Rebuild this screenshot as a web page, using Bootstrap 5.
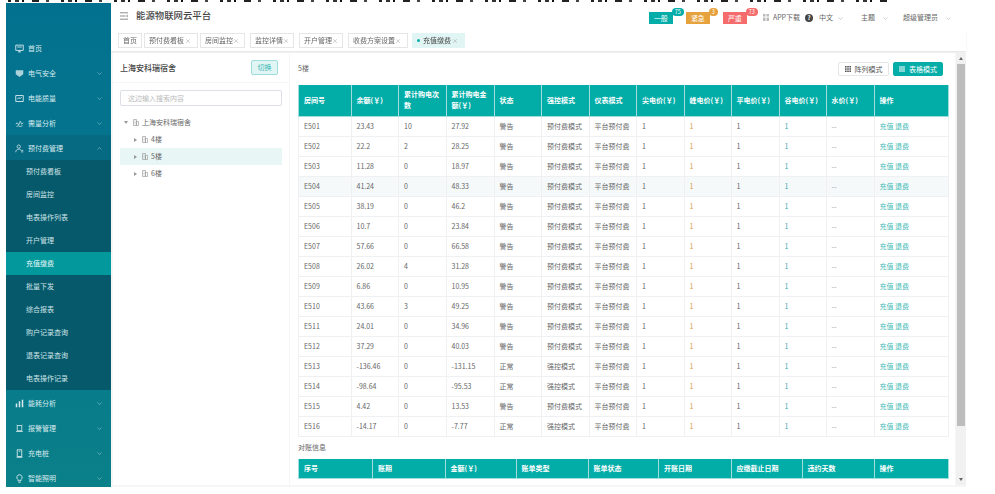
<!doctype html>
<html lang="zh-CN">
<head>
<meta charset="utf-8">
<title>能源物联网云平台</title>
<link href="https://cdn.jsdelivr.net/npm/bootstrap@5.3.0/dist/css/bootstrap.min.css" rel="stylesheet">
<style>
html,body{height:100%;overflow:hidden;background:#fff}
body{font-family:"Noto Sans CJK SC","Liberation Sans",sans-serif;font-size:7px;line-height:1.4;color:#666}
.cut-line{height:2px;margin:0 0 1px 8px;width:885px;background:repeating-linear-gradient(90deg,#222 0 3px,#fff 3px 7px,#333 7px 11px,#fff 11px 14px,#111 14px 16px,#fff 16px 24px,#222 24px 31px,#fff 31px 38px,#444 38px 41px,#fff 41px 53px)}
.app-frame{margin-left:6px;width:960px;height:484px;background:#f6f6f6;filter:blur(.3px)}
.side-bar{width:105px;flex:0 0 105px;padding-top:32px;overflow:hidden;background:linear-gradient(180deg,#02718f 0%,#07788c 60%,#0a8089 100%);color:#d5e9ee}
.menu-row{height:25px;flex:0 0 25px;padding:2px 9px 0 9px;gap:4px;color:#d8eaee;white-space:nowrap}
.menu-row svg.mi{width:9px;height:9px;flex:0 0 9px}
.menu-row.opened{background:#066a82}
.menu-chev{width:5px;height:5px;margin-left:auto;opacity:.65}
.sub-menu{background:#05596b;flex:0 0 auto}
.sub-row{height:23px;padding:1px 0 0 20px;color:#cfe4e8}
.sub-row.on{background:#02989c;color:#eafafa}
.main-col{min-width:0}
.top-head{height:27px;background:#fff;padding:0 15px 0 9px}
.menu-toggle{width:8px;height:8px;margin-right:8px;margin-top:-2px}
.app-name{font-size:9.4px;font-weight:500;color:#444;margin-top:-1px}
.head-right{margin-top:3px}
.alert-tag{position:relative;display:block;width:24px;height:12px;line-height:12px;text-align:center;color:#fff;font-size:7px}
.tag-teal{background:#04ada8}.tag-amber{background:#e6a23c}.tag-red{background:#f56c6c}
.tag-num{position:absolute;top:-4px;left:23px;height:8px;min-width:9px;padding:0 2px;line-height:8px;font-size:5.5px;font-weight:400;border-radius:4px;color:#fff}
.tag-wide{min-width:12px}
.tag-gap{gap:13px;margin-right:16px}
.head-tool{color:#666;white-space:nowrap}
.help-dot{display:inline-block;width:8px;height:8px;border-radius:50%;background:#444;color:#fff;font-size:6px;line-height:8px;text-align:center;font-weight:700;margin-left:5px}
.head-chev{width:5px;height:5px;opacity:.55;margin-left:8px}
.lang-txt{margin-left:6px}.lang-chev{margin-left:5px}
.theme-txt{margin-left:18px}.user-txt{margin-left:15px}
.tab-strip{height:21px;background:#fff;padding:3px 0 0 7px;gap:2px;box-shadow:0 1px 2px rgba(0,0,0,.08);position:relative;z-index:1}
.tab-chip{height:15px;line-height:13px;border:1px solid #e4e6e8;padding:0 6px 0 4px;background:#fff;color:#666;white-space:nowrap;display:flex;justify-content:space-between}
.tab-chip i{font-style:normal;font-size:6px;color:#aaa}
.tab-chip:nth-child(1){width:24px}.tab-chip:nth-child(2){width:54px}.tab-chip:nth-child(3){width:45px}
.tab-chip:nth-child(4){width:44px;margin-left:3px}.tab-chip:nth-child(5){width:44px;margin-left:3px}.tab-chip:nth-child(6){width:60px;margin-left:3px}.tab-chip:nth-child(7){width:53px;margin-left:2px}
.tab-chip.on{background:#e2f5f5;border-color:#e2f5f5;color:#444}
.tab-dot{display:inline-block;width:3px;height:3px;border-radius:50%;background:#04ada8;margin-right:3px;vertical-align:1px}
.body-area{padding:2px 0 2px 2px;gap:1px;min-height:0}
.tree-panel{width:176px;flex:0 0 176px;gap:1px}
.tree-top{height:29px;background:#fff;padding:0 11px 0 7px}
.tree-title{font-size:8px;font-weight:500;color:#444}
.switch-btn{--bs-btn-padding-y:0;--bs-btn-padding-x:0;--bs-btn-font-size:7px;--bs-btn-border-radius:2px;width:27px;height:15px;line-height:13px;background:#e2f5f5;border:1px solid #9fdedc;color:#33b5b1}
.tree-body{background:#fff;padding:7px 7px 0}
.tree-search{height:16px;min-height:16px;padding:0 7px;font-size:7px;border-radius:2px;border-color:#dcdfe6;color:#666}
.tree-search::placeholder{color:#bbb}
.tree-list{margin-top:8px}
.tree-node{height:17px;gap:3px;color:#666}
.lvl-1{padding-left:4px}.lvl-2{padding-left:14px}
.tree-node.on{background:#e9f6f6}
.tri{width:0;height:0;border-style:solid;display:inline-block}
.tri-r{border-width:2px 0 2px 3px;border-color:transparent transparent transparent #999}
.tri-d{border-width:3px 2px 0 2px;border-color:#999 transparent transparent transparent}
.folder-ic{width:6px;height:7px;margin-left:2px}
.data-panel{background:#fff;padding:0 8px 0 8px;overflow:hidden;min-width:0}
.data-top{height:32px;margin-right:4px}
.mode-btn{--bs-btn-padding-y:0;--bs-btn-padding-x:0;--bs-btn-font-size:7px;--bs-btn-border-radius:2px;height:14px;width:51px;gap:4px;line-height:12px}
.mode-off{background:#fff;border:1px solid #e4e6e8;color:#555}
.mode-on{background:#04ada8;border:1px solid #04ada8;color:#fff;width:50px}
table.grid-tb{table-layout:fixed;width:650px;margin:0;border-collapse:collapse;font-size:7px;color:#666;--bs-table-bg:transparent;--bs-table-border-color:#eef0f1}
table.grid-tb>*>tr>*{padding:0 5px;vertical-align:middle;border:1px solid #eef0f1;line-height:11px}
table.grid-tb thead th{background:#02ada8;color:#fff;font-weight:700;border-color:#9fdedc;border-top:0;height:31px}
table.grid-tb tbody td{height:20px;box-shadow:none;white-space:nowrap}
table.grid-tb tr.hl td{background:#f5f9fa}
.meter-tb th{width:47.5px}
.meter-tb th:nth-child(1){width:52.5px}.meter-tb th:nth-child(4){width:48px}.meter-tb th:nth-child(9),.meter-tb th:nth-child(11){width:47px}.meter-tb th:nth-child(10),.meter-tb th:nth-child(12){width:48px}.meter-tb th:nth-child(13){width:74.5px}
.pk{color:#d99a4e!important}.vl{color:#3aa7b0!important}.mu{color:#999!important}
.op-link{color:#3fbab6;text-decoration:none}
.recon-label{height:22px;margin-top:0;color:#666}
table.bill-tb thead th{height:20px!important}
.bill-tb th:nth-child(1){width:74px}.bill-tb th:nth-child(2){width:72.5px}.bill-tb th:nth-child(3){width:71px}.bill-tb th:nth-child(4){width:72px}.bill-tb th:nth-child(5){width:70.5px}.bill-tb th:nth-child(6){width:72.5px}.bill-tb th:nth-child(7){width:71px}.bill-tb th:nth-child(8){width:72px}.bill-tb th:nth-child(9){width:74.5px}
.fake-bar{width:10px;flex:0 0 10px;background:#f1f1f1;padding:4px 0;gap:2px}
.fake-thumb{width:8px;height:362px;background:#bdbdbd;margin:2px auto 0}
.arr{width:0;height:0;border-style:solid;margin:0 auto}
.arr-up{border-width:0 2.5px 3px 2.5px;border-color:transparent transparent #666 transparent}
.arr-dn{border-width:3px 2.5px 0 2.5px;border-color:#666 transparent transparent transparent;margin-top:auto}
</style>
</head>
<body>
<svg width="0" height="0" class="position-absolute">
  <symbol id="chev-d" viewBox="0 0 10 10"><path d="M1 3l4 4 4-4" fill="none" stroke="currentColor" stroke-width="1.2"/></symbol>
  <symbol id="chev-u" viewBox="0 0 10 10"><path d="M1 7l4-4 4 4" fill="none" stroke="currentColor" stroke-width="1.2"/></symbol>
  <symbol id="folder" viewBox="0 0 12 14"><path d="M1 1h6v12H1zM7 5h4v8H7zM3 4h2M3 7h2M3 10h2" fill="none" stroke="#999" stroke-width="1.3"/></symbol>
</svg>
<div class="cut-line"></div>
<div class="app-frame d-flex">
  <aside class="side-bar d-flex flex-column flex-shrink-0">
    <div class="menu-row d-flex align-items-center"><svg class="mi" viewBox="0 0 12 12"><path d="M1 1.5h10v7H1zM4 10.5h4M6 8.5v2M3 4h6" fill="none" stroke="currentColor" stroke-width="1.2"/></svg><span>首页</span></div>
    <div class="menu-row d-flex align-items-center"><svg class="mi" viewBox="0 0 12 12"><path d="M1 1.5h10v5.5L6 10.5 1 7z" fill="currentColor" opacity=".8"/></svg><span>电气安全</span><svg class="menu-chev"><use href="#chev-d"/></svg></div>
    <div class="menu-row d-flex align-items-center"><svg class="mi" viewBox="0 0 12 12"><path d="M1 2h10v8H1zM3 7l2-2 2 1 2-2" fill="none" stroke="currentColor" stroke-width="1.2"/></svg><span>电能质量</span><svg class="menu-chev"><use href="#chev-d"/></svg></div>
    <div class="menu-row d-flex align-items-center"><svg class="mi" viewBox="0 0 12 12"><path d="M1 7l2-2 2 3 2-5 2 4 2-2M2 10l2-1 3 1 3-1" fill="none" stroke="currentColor" stroke-width="1"/></svg><span>需量分析</span><svg class="menu-chev"><use href="#chev-d"/></svg></div>
    <div class="menu-row opened d-flex align-items-center"><svg class="mi" viewBox="0 0 12 12"><circle cx="5" cy="3.5" r="2.2" fill="none" stroke="currentColor"/><path d="M1 11c0-3 2-4 4-4s3 1 3.5 2M8 10.5h3M8.500 8.500h2.500" fill="none" stroke="currentColor"/></svg><span>预付费管理</span><svg class="menu-chev"><use href="#chev-u"/></svg></div>
    <div class="sub-menu">
      <div class="sub-row d-flex align-items-center">预付费看板</div>
      <div class="sub-row d-flex align-items-center">房间监控</div>
      <div class="sub-row d-flex align-items-center">电表操作列表</div>
      <div class="sub-row d-flex align-items-center">开户管理</div>
      <div class="sub-row on d-flex align-items-center">充值缴费</div>
      <div class="sub-row d-flex align-items-center">批量下发</div>
      <div class="sub-row d-flex align-items-center">综合报表</div>
      <div class="sub-row d-flex align-items-center">购户记录查询</div>
      <div class="sub-row d-flex align-items-center">退表记录查询</div>
      <div class="sub-row d-flex align-items-center">电表操作记录</div>
    </div>
    <div class="menu-row d-flex align-items-center"><svg class="mi" viewBox="0 0 12 12"><path d="M1 11V6h2v5zM5 11V3h2v8zM9 11V1h2v10z" fill="currentColor"/></svg><span>能耗分析</span><svg class="menu-chev"><use href="#chev-d"/></svg></div>
    <div class="menu-row d-flex align-items-center"><svg class="mi" viewBox="0 0 12 12"><path d="M3 2h6v7H3zM1.500 10h9M2 1l1 1M10 1L9 2" fill="none" stroke="currentColor" stroke-width="1.100"/></svg><span>报警管理</span><svg class="menu-chev"><use href="#chev-d"/></svg></div>
    <div class="menu-row d-flex align-items-center"><svg class="mi" viewBox="0 0 12 12"><path d="M3 1h6v9H3zM2 11h8M5 3h2" fill="none" stroke="currentColor" stroke-width="1.200"/></svg><span>充电桩</span><svg class="menu-chev"><use href="#chev-d"/></svg></div>
    <div class="menu-row d-flex align-items-center"><svg class="mi" viewBox="0 0 12 12"><path d="M6 1a3.500 3.500 0 0 0-2 6.400V9h4V7.400A3.500 3.500 0 0 0 6 1zM4.500 11h3" fill="none" stroke="currentColor" stroke-width="1.200"/></svg><span>智能照明</span><svg class="menu-chev"><use href="#chev-d"/></svg></div>
  </aside>
  <div class="main-col d-flex flex-column flex-grow-1">
    <header class="top-head d-flex align-items-center">
      <svg class="menu-toggle" viewBox="0 0 10 10"><path d="M0 1h10M0 5h7M0 9h10M9 3.500v3" fill="none" stroke="#888" stroke-width="1.200"/></svg>
      <div class="app-name">能源物联网云平台</div>
      <div class="head-right ms-auto d-flex align-items-center">
        <div class="d-flex tag-gap">
          <span class="alert-tag tag-teal">一般<span class="tag-num tag-wide tag-teal">75</span></span>
          <span class="alert-tag tag-amber">紧急<span class="tag-num tag-amber">3</span></span>
          <span class="alert-tag tag-red">严重<span class="tag-num tag-wide tag-red">73</span></span>
        </div>
        <span class="head-tool d-flex align-items-center gap-1"><svg width="6" height="7" viewBox="0 0 6 7"><path d="M0 0h2.500v2.500H0zM3.500 0H6v2.500H3.500zM0 3.500h2.500V7H0zM3.500 3.500H6V7H3.500z" fill="#bbb"/></svg>APP下载</span>
        <span class="help-dot">?</span>
        <span class="head-tool lang-txt">中文</span><svg class="head-chev lang-chev text-secondary"><use href="#chev-d"/></svg>
        <span class="head-tool theme-txt">主题</span><svg class="head-chev text-secondary"><use href="#chev-d"/></svg>
        <span class="head-tool user-txt">超级管理员</span><svg class="head-chev text-secondary"><use href="#chev-d"/></svg>
      </div>
    </header>
    <nav class="tab-strip d-flex">
      <span class="tab-chip">首页</span>
      <span class="tab-chip"><span>预付费看板</span><i>×</i></span>
      <span class="tab-chip"><span>房间监控</span><i>×</i></span>
      <span class="tab-chip"><span>监控详情</span><i>×</i></span>
      <span class="tab-chip"><span>开户管理</span><i>×</i></span>
      <span class="tab-chip"><span>收费方案设置</span><i>×</i></span>
      <span class="tab-chip on"><span><span class="tab-dot"></span>充值缴费</span><i>×</i></span>
    </nav>
    <div class="body-area d-flex flex-grow-1">
      <section class="tree-panel d-flex flex-column">
        <div class="tree-top d-flex align-items-center justify-content-between">
          <span class="tree-title">上海安科瑞宿舍</span>
          <button type="button" class="btn switch-btn">切换</button>
        </div>
        <div class="tree-body flex-grow-1">
          <input class="form-control tree-search" type="text" placeholder="这边输入搜索内容">
          <div class="tree-list">
            <div class="tree-node lvl-1 d-flex align-items-center"><span class="tri tri-d"></span><svg class="folder-ic"><use href="#folder"/></svg><span>上海安科瑞宿舍</span></div>
            <div class="tree-node lvl-2 d-flex align-items-center"><span class="tri tri-r"></span><svg class="folder-ic"><use href="#folder"/></svg><span>4楼</span></div>
            <div class="tree-node on lvl-2 d-flex align-items-center"><span class="tri tri-r"></span><svg class="folder-ic"><use href="#folder"/></svg><span>5楼</span></div>
            <div class="tree-node lvl-2 d-flex align-items-center"><span class="tri tri-r"></span><svg class="folder-ic"><use href="#folder"/></svg><span>6楼</span></div>
          </div>
        </div>
      </section>
      <section class="data-panel flex-grow-1">
        <div class="data-top d-flex align-items-center">
          <span class="me-auto">5楼</span>
          <button type="button" class="btn mode-btn mode-off d-flex align-items-center justify-content-center"><svg width="6" height="6" viewBox="0 0 6 6"><path d="M0 0h1.600v1.600H0zM2.200 0h1.600v1.600H2.200zM4.400 0H6v1.600H4.400zM0 2.200h1.600v1.600H0zM2.200 2.200h1.600v1.600H2.200zM4.400 2.200H6v1.600H4.400zM0 4.400h1.600V6H0zM2.200 4.400h1.600V6H2.200zM4.400 4.400H6V6H4.400z" fill="#555"/></svg>阵列模式</button>
          <button type="button" class="btn mode-btn mode-on d-flex align-items-center justify-content-center ms-1"><svg width="6" height="6" viewBox="0 0 6 6"><path d="M0 .5h6v1H0zM0 2.500h6v1H0zM0 4.500h6v1H0z" fill="#fff"/></svg>表格模式</button>
        </div>
        <table class="table grid-tb meter-tb">
          <thead><tr><th>房间号</th><th>余额(￥)</th><th>累计购电次数</th><th>累计购电金额(￥)</th><th>状态</th><th>强控模式</th><th>仪表模式</th><th>尖电价(￥)</th><th>峰电价(￥)</th><th>平电价(￥)</th><th>谷电价(￥)</th><th>水价(￥)</th><th>操作</th></tr></thead>
          <tbody>
            <tr><td>E501</td><td>23.43</td><td>10</td><td>27.92</td><td>警告</td><td>预付费模式</td><td>平台预付费</td><td>1</td><td class="pk">1</td><td>1</td><td class="vl">1</td><td class="mu">--</td><td><a class="op-link" href="#">充值</a> <a class="op-link" href="#">退费</a></td></tr>
            <tr><td>E502</td><td>22.2</td><td>2</td><td>28.25</td><td>警告</td><td>预付费模式</td><td>平台预付费</td><td>1</td><td class="pk">1</td><td>1</td><td class="vl">1</td><td class="mu">--</td><td><a class="op-link" href="#">充值</a> <a class="op-link" href="#">退费</a></td></tr>
            <tr><td>E503</td><td>11.28</td><td>0</td><td>18.97</td><td>警告</td><td>预付费模式</td><td>平台预付费</td><td>1</td><td class="pk">1</td><td>1</td><td class="vl">1</td><td class="mu">--</td><td><a class="op-link" href="#">充值</a> <a class="op-link" href="#">退费</a></td></tr>
            <tr class="hl"><td>E504</td><td>41.24</td><td>0</td><td>48.33</td><td>警告</td><td>预付费模式</td><td>平台预付费</td><td>1</td><td class="pk">1</td><td>1</td><td class="vl">1</td><td class="mu">--</td><td><a class="op-link" href="#">充值</a> <a class="op-link" href="#">退费</a></td></tr>
            <tr><td>E505</td><td>38.19</td><td>0</td><td>46.2</td><td>警告</td><td>预付费模式</td><td>平台预付费</td><td>1</td><td class="pk">1</td><td>1</td><td class="vl">1</td><td class="mu">--</td><td><a class="op-link" href="#">充值</a> <a class="op-link" href="#">退费</a></td></tr>
            <tr><td>E506</td><td>10.7</td><td>0</td><td>23.84</td><td>警告</td><td>预付费模式</td><td>平台预付费</td><td>1</td><td class="pk">1</td><td>1</td><td class="vl">1</td><td class="mu">--</td><td><a class="op-link" href="#">充值</a> <a class="op-link" href="#">退费</a></td></tr>
            <tr><td>E507</td><td>57.66</td><td>0</td><td>66.58</td><td>警告</td><td>预付费模式</td><td>平台预付费</td><td>1</td><td class="pk">1</td><td>1</td><td class="vl">1</td><td class="mu">--</td><td><a class="op-link" href="#">充值</a> <a class="op-link" href="#">退费</a></td></tr>
            <tr><td>E508</td><td>26.02</td><td>4</td><td>31.28</td><td>警告</td><td>预付费模式</td><td>平台预付费</td><td>1</td><td class="pk">1</td><td>1</td><td class="vl">1</td><td class="mu">--</td><td><a class="op-link" href="#">充值</a> <a class="op-link" href="#">退费</a></td></tr>
            <tr><td>E509</td><td>6.86</td><td>0</td><td>10.95</td><td>警告</td><td>预付费模式</td><td>平台预付费</td><td>1</td><td class="pk">1</td><td>1</td><td class="vl">1</td><td class="mu">--</td><td><a class="op-link" href="#">充值</a> <a class="op-link" href="#">退费</a></td></tr>
            <tr><td>E510</td><td>43.66</td><td>3</td><td>49.25</td><td>警告</td><td>预付费模式</td><td>平台预付费</td><td>1</td><td class="pk">1</td><td>1</td><td class="vl">1</td><td class="mu">--</td><td><a class="op-link" href="#">充值</a> <a class="op-link" href="#">退费</a></td></tr>
            <tr><td>E511</td><td>24.01</td><td>0</td><td>34.96</td><td>警告</td><td>预付费模式</td><td>平台预付费</td><td>1</td><td class="pk">1</td><td>1</td><td class="vl">1</td><td class="mu">--</td><td><a class="op-link" href="#">充值</a> <a class="op-link" href="#">退费</a></td></tr>
            <tr><td>E512</td><td>37.29</td><td>0</td><td>40.03</td><td>警告</td><td>预付费模式</td><td>平台预付费</td><td>1</td><td class="pk">1</td><td>1</td><td class="vl">1</td><td class="mu">--</td><td><a class="op-link" href="#">充值</a> <a class="op-link" href="#">退费</a></td></tr>
            <tr><td>E513</td><td>-136.46</td><td>0</td><td>-131.15</td><td>正常</td><td>强控模式</td><td>平台预付费</td><td>1</td><td class="pk">1</td><td>1</td><td class="vl">1</td><td class="mu">--</td><td><a class="op-link" href="#">充值</a> <a class="op-link" href="#">退费</a></td></tr>
            <tr><td>E514</td><td>-98.64</td><td>0</td><td>-95.53</td><td>正常</td><td>强控模式</td><td>平台预付费</td><td>1</td><td class="pk">1</td><td>1</td><td class="vl">1</td><td class="mu">--</td><td><a class="op-link" href="#">充值</a> <a class="op-link" href="#">退费</a></td></tr>
            <tr><td>E515</td><td>4.42</td><td>0</td><td>13.53</td><td>警告</td><td>预付费模式</td><td>平台预付费</td><td>1</td><td class="pk">1</td><td>1</td><td class="vl">1</td><td class="mu">--</td><td><a class="op-link" href="#">充值</a> <a class="op-link" href="#">退费</a></td></tr>
            <tr><td>E516</td><td>-14.17</td><td>0</td><td>-7.77</td><td>正常</td><td>强控模式</td><td>平台预付费</td><td>1</td><td class="pk">1</td><td>1</td><td class="vl">1</td><td class="mu">--</td><td><a class="op-link" href="#">充值</a> <a class="op-link" href="#">退费</a></td></tr>
          </tbody>
        </table>
        <div class="recon-label d-flex align-items-center">对账信息</div>
        <table class="table grid-tb bill-tb">
          <thead><tr><th>序号</th><th>账期</th><th>金额(￥)</th><th>账单类型</th><th>账单状态</th><th>开账日期</th><th>应缴截止日期</th><th>违约天数</th><th>操作</th></tr></thead>
        </table>
      </section>
      <div class="fake-bar d-flex flex-column">
        <span class="arr arr-up"></span>
        <span class="fake-thumb"></span>
        <span class="arr arr-dn"></span>
      </div>
    </div>
  </div>
</div>
<script src="https://cdn.jsdelivr.net/npm/bootstrap@5.3.0/dist/js/bootstrap.bundle.min.js"></script>
</body>
</html>
